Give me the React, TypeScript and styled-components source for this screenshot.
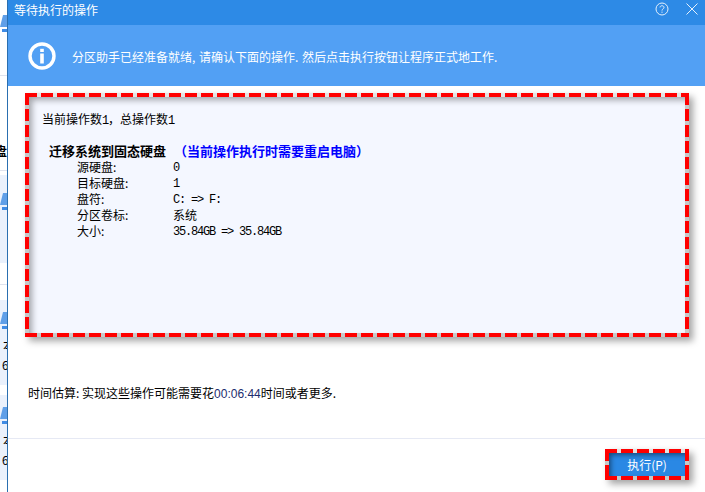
import React from 'react';
import styled, { createGlobalStyle } from 'styled-components';

const GlobalStyle = createGlobalStyle`
  html, body {
    margin: 0;
    padding: 0;
    background: #fff;
    overflow: hidden;
  }
  body {
    font-family: "Noto Sans CJK SC", "Liberation Sans", sans-serif;
    font-size: 12px;
    color: #000;
  }
`;

const Page = styled.div`
  display: flex;
  width: 705px;
  height: 492px;
  overflow: hidden;
`;

// the main program window peeking out behind the dialog
const BehindStrip = styled.div`
  display: flex;
  flex-direction: column;
  width: 7px;
  flex-shrink: 0;
  overflow: hidden;
`;

const StripRow = styled.div<{ $height: number; $tint?: boolean; $line?: boolean }>`
  display: flex;
  flex-direction: column;
  align-items: flex-end;
  height: ${(p) => p.$height}px;
  flex-shrink: 0;
  box-sizing: border-box;
  background: ${(p) => (p.$tint ? '#eaf1fc' : '#fff')};
  border-bottom: ${(p) => (p.$line ? '1px solid #dfe3ee' : 'none')};
`;

const StripIcon = styled.svg<{ $top: number }>`
  display: block;
  margin-top: ${(p) => p.$top}px;
  flex-shrink: 0;
`;

const StripText = styled.span<{ $top: number; $bold?: boolean; $indent?: number }>`
  display: block;
  margin-top: ${(p) => p.$top}px;
  align-self: ${(p) => (p.$indent === undefined ? 'flex-end' : 'flex-start')};
  margin-left: ${(p) => p.$indent ?? 0}px;
  width: 12px;
  line-height: 14px;
  font-size: 12px;
  font-weight: ${(p) => (p.$bold ? 700 : 400)};
  white-space: nowrap;
  flex-shrink: 0;
`;

const DialogWindow = styled.div`
  display: flex;
  flex-direction: column;
  flex: 1;
  min-width: 0;
  border-left: 1px solid #2a6fb0;
  background: #fff;
`;

const TitleBar = styled.div`
  display: flex;
  height: 25px;
  flex-shrink: 0;
  box-sizing: border-box;
  padding: 3px 7px 0 6px;
  background: #2d8ae6;
  color: #fff;
`;

const TitleText = styled.span`
  flex: 1;
  font-size: 12px;
  line-height: 14px;
`;

const TitleButton = styled.svg<{ $gap?: number; $top?: number }>`
  display: block;
  margin-left: ${(p) => p.$gap ?? 0}px;
  margin-top: ${(p) => p.$top ?? 0}px;
`;

const Banner = styled.div`
  display: flex;
  align-items: center;
  gap: 16px;
  height: 61px;
  flex-shrink: 0;
  box-sizing: border-box;
  padding: 0 0 0 20px;
  background: #52a0f4;
  color: #fff;
`;

const BannerText = styled.span`
  font-size: 12px;
  line-height: 14px;
  margin-top: 2px;
  word-spacing: 1px;
  white-space: nowrap;
`;

const Content = styled.div`
  display: flex;
  flex-direction: column;
  flex: 1;
  min-height: 0;
  padding: 7px 16px 0 17px;
`;

// red dashed annotation drawn over the screenshot, with its soft shadow
const DashedFrame = styled.div`
  box-sizing: border-box;
  padding: 4px;
  background:
    repeating-linear-gradient(90deg, #ff0000 0 12px, #e4e4e4 12px 16px) left top / 100% 4px no-repeat,
    repeating-linear-gradient(90deg, #ff0000 0 12px, #c8c8c8 12px 16px) left bottom / 100% 4px no-repeat,
    repeating-linear-gradient(180deg, #ff0000 0 12px, #c8c8c8 12px 16px) left top / 4px 100% no-repeat,
    repeating-linear-gradient(180deg, #ff0000 0 12px, #c8c8c8 12px 16px) right top / 4px 100% no-repeat;
  box-shadow: 4px 4px 7px rgba(0, 0, 0, 0.36);
`;

const SummaryFrame = styled(DashedFrame)`
  height: 244px;
  flex-shrink: 0;
`;

const SummaryPanel = styled.div`
  height: 100%;
  box-sizing: border-box;
  padding: 15px 0 0 13px;
  background: #f4f7ff;
  box-shadow: inset 4px 4px 6px -1px rgba(0, 0, 0, 0.34);
  font-size: 12px;
`;

// digits in the list are half a CJK cell wide
const Mono = styled.span`
  font-family: "Liberation Mono", "Noto Sans CJK SC", monospace;
  font-size: 12px;
  letter-spacing: -1.2px;
`;

const CountLine = styled.div`
  line-height: 14px;
`;

const OperationHeading = styled.div`
  display: flex;
  gap: 8px;
  margin: 15px 0 0 7px;
  font-size: 13px;
  line-height: 16px;
  font-weight: 700;
  white-space: nowrap;
`;

const RebootNote = styled.span`
  color: #0000ff;
`;

const DetailList = styled.div`
  display: grid;
  grid-template-columns: 96px 1fr;
  grid-auto-rows: 16px;
  margin: 0 0 0 35px;
  align-items: center;
  line-height: 16px;
`;

const Estimate = styled.div`
  margin: 49px 0 0 3px;
  line-height: 14px;
  white-space: nowrap;
`;

const EstimateTime = styled.span`
  font-family: "Liberation Sans", sans-serif;
  font-size: 12px;
  color: #1c2c6e;
`;

const Footer = styled.div`
  display: flex;
  justify-content: flex-end;
  height: 54px;
  flex-shrink: 0;
  box-sizing: border-box;
  padding: 10px 16px 0 0;
  border-top: 1px solid #e6e9f4;
`;

const RunFrame = styled(DashedFrame)`
  width: 84px;
  height: 31px;
`;

const RunButton = styled.button`
  display: block;
  width: 100%;
  height: 100%;
  padding: 0;
  border: none;
  background: #2a88e4;
  box-shadow: inset 3px 3px 5px -1px rgba(0, 0, 0, 0.45);
  color: #fff;
  font-family: inherit;
  font-size: 12px;
  line-height: 14px;
`;

function BehindIcon({ top }: { top: number }) {
  return (
    <StripIcon $top={top} width="7" height="19" viewBox="0 0 7 19">
      <path d="M3 0 H7 V12 H0 Z" fill="#5f9fe8" />
      <rect x="2" y="14" width="5" height="3" fill="#3f8be4" />
    </StripIcon>
  );
}

function InfoIcon() {
  return (
    <svg width="28" height="28" viewBox="0 0 28 28" style={{ display: 'block', flexShrink: 0 }}>
      <circle cx="14" cy="14" r="12" fill="none" stroke="#fff" strokeWidth="3.4" />
      <rect x="12.2" y="11.5" width="3.6" height="10" fill="#fff" />
      <rect x="12.2" y="6.8" width="3.6" height="3.2" fill="#fff" />
    </svg>
  );
}

const details: [string, React.ReactNode][] = [
  ['源硬盘:', <Mono key="a">0</Mono>],
  ['目标硬盘:', <Mono key="b">1</Mono>],
  ['盘符:', <Mono key="c">C: =&gt; F:</Mono>],
  ['分区卷标:', '系统'],
  ['大小:', <Mono key="d">35.84GB =&gt; 35.84GB</Mono>],
];

export default function App() {
  return (
    <Page>
      <GlobalStyle />
      <BehindStrip>
        <StripRow $height={76} $line>
          <BehindIcon top={15} />
        </StripRow>
        <StripRow $height={95} $line>
          <StripText $top={68} $bold>盘</StripText>
        </StripRow>
        <StripRow $height={4} />
        <StripRow $height={88} $tint>
          <BehindIcon top={18} />
        </StripRow>
        <StripRow $height={22} $line />
        <StripRow $height={15} />
        <StripRow $height={85} $tint>
          <BehindIcon top={12} />
          <StripText $top={7} $indent={3}>本</StripText>
          <StripText $top={6} $indent={2}>6</StripText>
        </StripRow>
        <StripRow $height={10} />
        <StripRow $height={85} $tint>
          <BehindIcon top={12} />
          <StripText $top={7} $indent={3}>本</StripText>
          <StripText $top={6} $indent={2}>6</StripText>
        </StripRow>
      </BehindStrip>
      <DialogWindow>
        <TitleBar>
          <TitleText>等待执行的操作</TitleText>
          <TitleButton width="14" height="14" viewBox="0 0 14 14" $top={-1}>
            <circle cx="7" cy="7" r="6" fill="none" stroke="#e4f0fc" strokeWidth="1" />
            <path d="M5 5.4 C5 3.2 9 3.2 9 5.4 C9 6.9 7 6.8 7 8.6" fill="none" stroke="#e4f0fc" strokeWidth="1" />
            <rect x="6.5" y="9.6" width="1" height="1.2" fill="#e4f0fc" />
          </TitleButton>
          <TitleButton $gap={17} width="12" height="12" viewBox="0 0 12 12">
            <path d="M0.5 0.5 L11.5 11.5 M11.5 0.5 L0.5 11.5" stroke="#e4f0fc" strokeWidth="1" />
          </TitleButton>
        </TitleBar>
        <Banner>
          <InfoIcon />
          <BannerText>分区助手已经准备就绪, 请确认下面的操作. 然后点击执行按钮让程序正式地工作.</BannerText>
        </Banner>
        <Content>
          <SummaryFrame>
            <SummaryPanel>
              <CountLine>
                当前操作数<Mono>1</Mono>，总操作数<Mono>1</Mono>
              </CountLine>
              <OperationHeading>
                <span>迁移系统到固态硬盘</span>
                <RebootNote>（当前操作执行时需要重启电脑）</RebootNote>
              </OperationHeading>
              <DetailList>
                {details.map(([label, value]) => (
                  <React.Fragment key={label}>
                    <span>{label}</span>
                    <span>{value}</span>
                  </React.Fragment>
                ))}
              </DetailList>
            </SummaryPanel>
          </SummaryFrame>
          <Estimate>
            时间估算: 实现这些操作可能需要花<EstimateTime>00:06:44</EstimateTime>时间或者更多.
          </Estimate>
        </Content>
        <Footer>
          <RunFrame>
            <RunButton type="button">执行(P)</RunButton>
          </RunFrame>
        </Footer>
      </DialogWindow>
    </Page>
  );
}
